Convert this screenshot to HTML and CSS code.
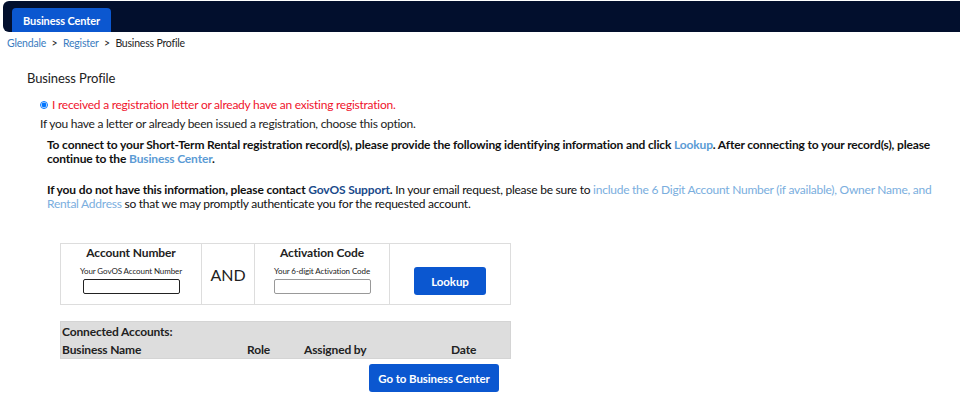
FILE: index.html
```html
<!DOCTYPE html>
<html lang="en">

<head>
    <meta charset="UTF-8">
    <meta name="viewport" content="width=device-width, initial-scale=1.0">
    <title>Business Profile</title>
    <link rel="stylesheet" href="styles.css">
</head>

<body>
    <div class="topbar">
        <a class="tab" href="#">Business Center</a>
    </div>
    <div class="crumbs">
        <a href="#">Glendale</a> <span class="sep">&gt;</span> <a href="#">Register</a> <span class="sep">&gt;</span> Business Profile
    </div>

    <div class="content">
        <h2>Business Profile</h2>

        <label class="option">
            <input type="radio" name="regtype" checked>
            <span>I received a registration letter or already have an existing registration.</span>
        </label>
        <p class="hint">If you have a letter or already been issued a registration, choose this option.</p>

        <div class="instructions">
            <p>To connect to your Short-Term Rental registration record(s), please provide the following identifying information and click <a href="#">Lookup</a>. After connecting to your record(s), please continue to the <a href="#">Business Center</a>.</p>
            <p>If you do not have this information, please contact <a class="dark" href="#">GovOS Support</a>. <span class="normal">In your email request, please be sure to <a href="#">include the 6 Digit Account Number (if available), Owner Name, and Rental Address</a> so that we may promptly authenticate you for the requested account.</span></p>
        </div>

        <table class="lookup">
            <tr>
                <td class="c1">
                    <div class="label">Account Number</div>
                    <div class="sub">Your GovOS Account Number</div>
                    <input type="text" class="field focus">
                </td>
                <td class="c2">AND</td>
                <td class="c3">
                    <div class="label">Activation Code</div>
                    <div class="sub">Your 6-digit Activation Code</div>
                    <input type="text" class="field">
                </td>
                <td class="c4">
                    <button class="btn">Lookup</button>
                </td>
            </tr>
        </table>

        <table class="accounts">
            <tr>
                <th colspan="4">Connected Accounts:</th>
            </tr>
            <tr>
                <th class="name">Business Name</th>
                <th class="role">Role</th>
                <th class="by">Assigned by</th>
                <th class="date">Date</th>
            </tr>
        </table>

        <div class="actions">
            <button class="btn wide">Go to Business Center</button>
        </div>
    </div>
</body>

</html>
```

FILE: styles.css
```css
body {
    margin: 0;
    font-family: Lato, "Noto Sans", sans-serif;
    font-size: 12px;
    letter-spacing: -0.25px;
    color: #222;
}

a {
    color: #5b9bd5;
    text-decoration: none;
}

.topbar {
    margin: 1px 0 0 3px;
    height: 31px;
    background-color: #020f2d;
    border-radius: 6px 0 0 6px;
    display: flex;
    align-items: flex-end;
    padding-left: 9px;
}

.tab {
    background-color: #0b57d0;
    color: #fff;
    font-size: 11px;
    font-weight: bold;
    letter-spacing: -0.1px;
    height: 24px;
    line-height: 25px;
    padding: 0 11px;
    border-radius: 4px 4px 0 0;
}

.crumbs {
    font-size: 10.5px;
    letter-spacing: -0.2px;
    padding: 5px 0 0 7px;
    color: #222;
}

.crumbs a {
    color: #3a7cc0;
}

.crumbs .sep {
    margin: 0 3px;
}

.content {
    padding: 0 0 0 27px;
}

h2 {
    font-size: 13px;
    font-weight: normal;
    letter-spacing: -0.1px;
    margin: 21px 0 11px;
}

.option {
    display: flex;
    align-items: center;
    gap: 4px;
    margin-left: 13px;
    color: #f0142d;
}

.option input {
    width: 8px;
    height: 8px;
    margin: 0;
}

.hint {
    margin: 4px 0 0 13px;
}

.instructions {
    margin: 7px 20px 0 20px;
    font-weight: bold;
    letter-spacing: -0.15px;
    color: #111;
}

.instructions p {
    margin: 0 0 17px;
    line-height: 14px;
}

.instructions .dark {
    color: #1a4a8a;
}

.instructions .normal {
    font-weight: normal;
    letter-spacing: -0.25px;
}

.instructions .normal a {
    color: #7aaede;
}

table {
    border-collapse: collapse;
}

.lookup {
    margin: 32px 0 0 33px;
    width: 451px;
    height: 62px;
}

.lookup td {
    border: 1px solid #ddd;
    text-align: center;
    vertical-align: top;
    padding: 1px 0 0;
}

.lookup .c1 {
    width: 140px;
}

.lookup .c2 {
    width: 52px;
    font-size: 16px;
    letter-spacing: 0;
    vertical-align: middle;
    padding: 0;
}

.lookup .c3 {
    width: 134px;
}

.lookup .c4 {
    padding-top: 23px;
}

.label {
    font-weight: bold;
    font-size: 12px;
    line-height: 15px;
    letter-spacing: -0.1px;
}

.sub {
    font-size: 8px;
    letter-spacing: -0.1px;
    margin: 6px 0 3px;
}

.field {
    width: 95px;
    height: 13px;
    border: 1px solid #999;
    border-radius: 2px;
    padding: 0;
}

.field.focus {
    border: 1.5px solid #222;
}

.btn {
    background-color: #0b57d0;
    color: #fff;
    border: none;
    border-radius: 3px;
    font-family: inherit;
    font-weight: bold;
    font-size: 11.5px;
    letter-spacing: -0.1px;
    white-space: nowrap;
    width: 72px;
    height: 28px;
}

.accounts {
    margin: 16px 0 0 33px;
    width: 451px;
    background-color: #ddd;
    border: 1px solid #d4d4d4;
}

.accounts th {
    text-align: left;
    font-size: 12px;
    letter-spacing: -0.15px;
    padding: 1px 1px;
    height: 16px;
}

.accounts .name {
    width: 183px;
}

.accounts .role {
    width: 55px;
}

.accounts .by {
    width: 145px;
}

.actions {
    margin: 5px 0 0 342px;
}

.btn.wide {
    width: 130px;
}
```
